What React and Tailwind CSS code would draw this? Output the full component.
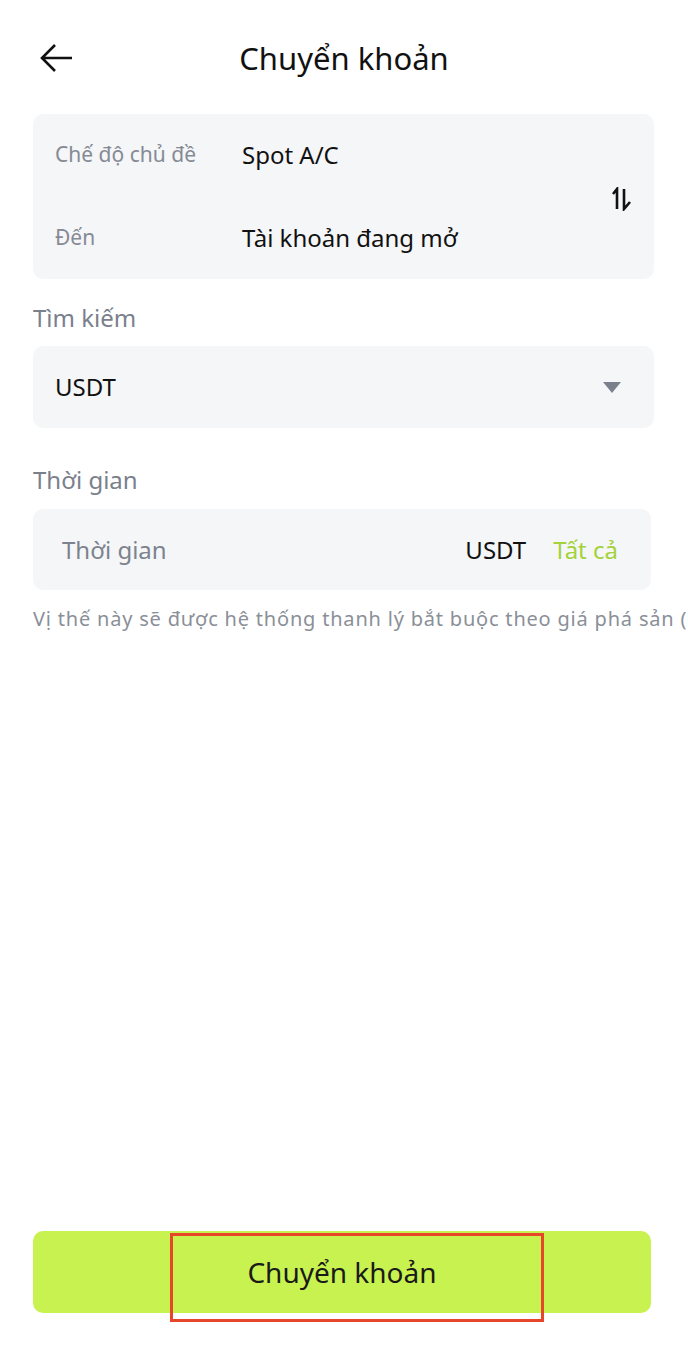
import React from "react";

function SwapIcon() {
  return (
    <svg width="22" height="24" viewBox="0 0 22 24" fill="none">
      <path d="M5 22V2L1 7" stroke="#111" strokeWidth="2.6" strokeLinejoin="miter" />
      <path d="M12 2V22L18 15" stroke="#111" strokeWidth="2.6" strokeLinejoin="miter" />
    </svg>
  );
}

function BackArrow() {
  return (
    <svg width="34" height="30" viewBox="0 0 34 30" fill="none">
      <path d="M32 15H3M15 2L2 15L15 28" stroke="#111" strokeWidth="2.6" />
    </svg>
  );
}

export default function App() {
  return (
    <div className="relative w-[688px] h-[1346px] overflow-hidden bg-white font-['Noto_Sans',sans-serif] text-[#111]">
      <header className="h-[116px] relative flex items-center justify-center">
        <div className="absolute left-[40px] top-[43px]">
          <BackArrow />
        </div>
        <h1 className="text-[31px] leading-none">Chuyển khoản</h1>
      </header>

      <div className="px-[33px] -mt-[2px]">
        <div className="h-[165px] w-[621px] rounded-[10px] bg-[#f5f6f8] flex items-center pl-[22px] pr-[20px]">
          <div className="flex-1 flex flex-col gap-[47px]">
            <div className="flex items-center h-[36px]">
              <span className="w-[187px] text-[21px] text-[#858a94]">Chế độ chủ đề</span>
              <span className="text-[24px]">Spot A/C</span>
            </div>
            <div className="flex items-center h-[36px]">
              <span className="w-[187px] text-[21px] text-[#858a94]">Đến</span>
              <span className="text-[24px]">Tài khoản đang mở</span>
            </div>
          </div>
          <div className="pt-[4px]">
            <SwapIcon />
          </div>
        </div>

        <div className="mt-[22px] text-[24px] text-[#7a808c] leading-[34px]">Tìm kiếm</div>
        <div className="mt-[11px] h-[82px] w-[621px] rounded-[10px] bg-[#f5f6f8] flex items-center justify-between pl-[22px] pr-[33px]">
          <span className="text-[24px]">USDT</span>
          <svg width="18" height="11" viewBox="0 0 18 11">
            <path d="M0 0H18L9 11Z" fill="#7a808c" />
          </svg>
        </div>

        <div className="mt-[35px] text-[24px] text-[#7a808c] leading-[34px]">Thời gian</div>
        <div className="mt-[12px] h-[81px] w-[618px] rounded-[10px] bg-[#f5f6f8] flex items-center pl-[29px] pr-[33px]">
          <span className="flex-1 text-[24px] text-[#7d838e]">Thời gian</span>
          <span className="text-[24px]">USDT</span>
          <span className="ml-[27px] text-[24px] text-[#a4d23a]">Tất cả</span>
        </div>
        <p className="mt-[16px] whitespace-nowrap text-[20px] tracking-[0.8px] text-[#8a8f98] leading-[26px]">
          Vị thế này sẽ được hệ thống thanh lý bắt buộc theo giá phá sản (giá thanh lý)
        </p>
      </div>

      <div className="absolute left-[33px] top-[1231px] w-[618px] h-[82px] rounded-[10px] bg-[#c8f250] flex items-center justify-center">
        <span className="text-[28px] text-[#1a1a1a]">Chuyển khoản</span>
      </div>
      <div className="absolute left-[170px] top-[1233px] w-[374px] h-[89px] border-[3px] border-[#e8462a]" />
    </div>
  );
}
